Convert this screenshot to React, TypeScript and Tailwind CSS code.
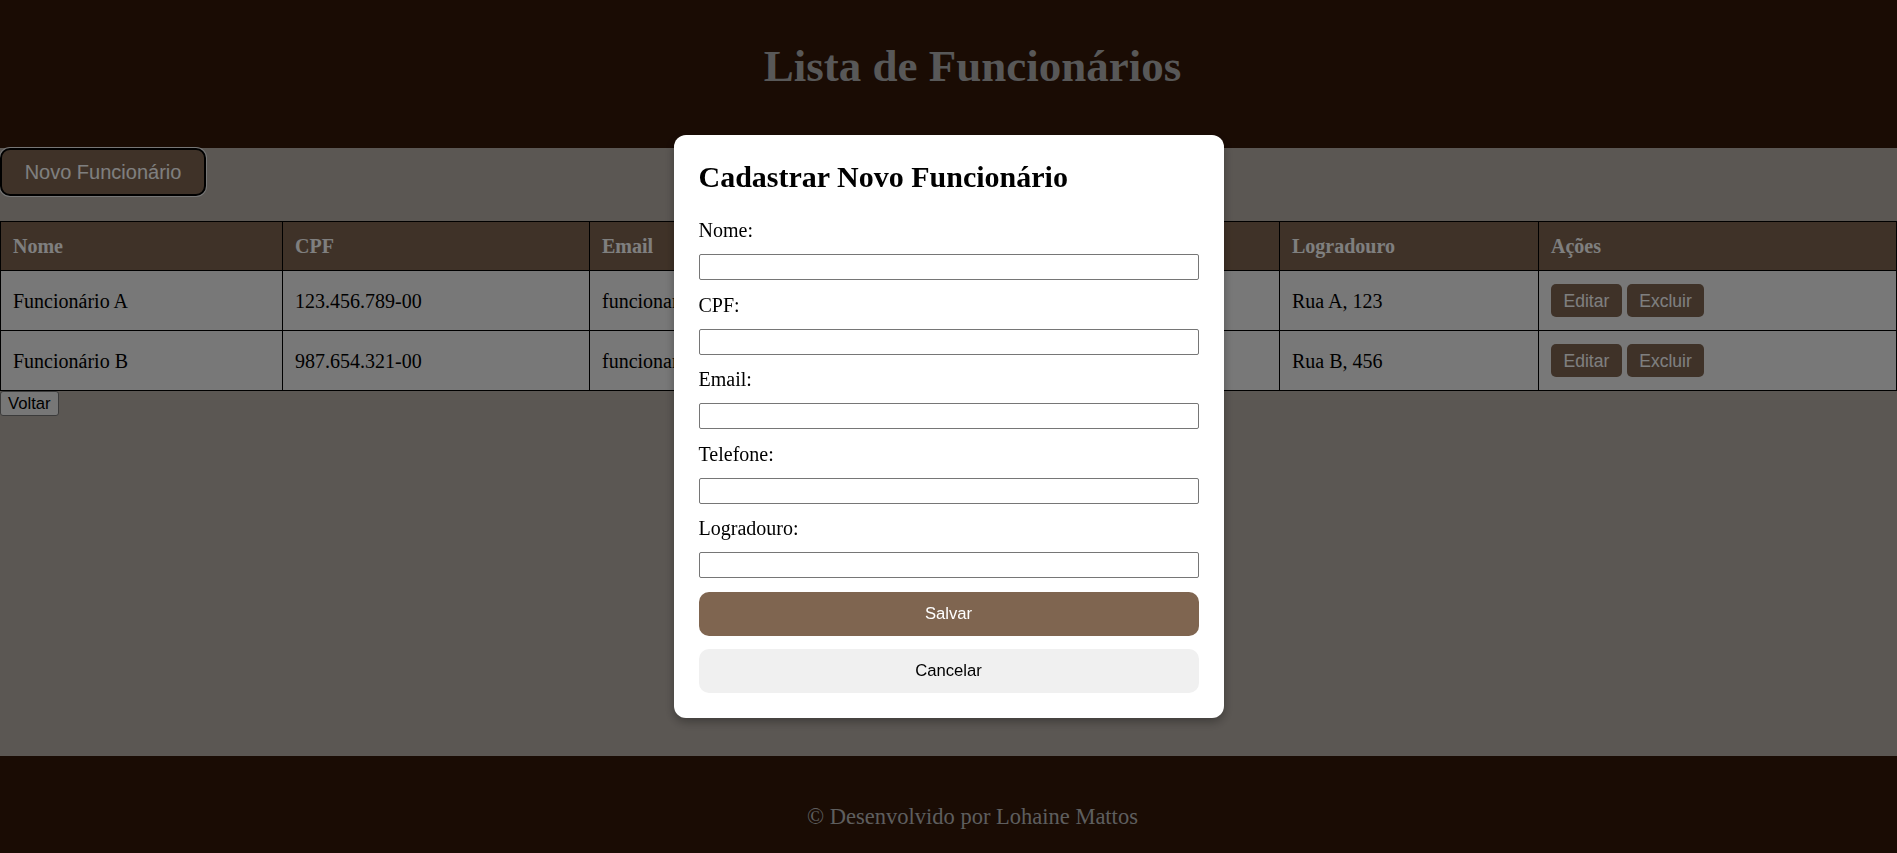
import React from 'react';

const EMPLOYEES = [
  { nome: 'Funcionário A', cpf: '123.456.789-00', email: 'funcionarioa@email.com', telefone: '(11) 91234-5678', logradouro: 'Rua A, 123' },
  { nome: 'Funcionário B', cpf: '987.654.321-00', email: 'funcionariob@email.com', telefone: '(11) 98765-4321', logradouro: 'Rua B, 456' },
];

const FIELDS = ['Nome', 'CPF', 'Email', 'Telefone', 'Logradouro'];

const sans = "font-['Liberation_Sans',Arial,sans-serif]";

export default function App() {
  const [open, setOpen] = React.useState(true);

  return (
    <div className="font-['Liberation_Serif','Times_New_Roman',serif] text-[20px] text-black">
      <header className="h-[148px] bg-[#341809] pl-[48px] pt-[40px]">
        <h1 className="text-center text-[45px] font-bold leading-[52px] text-[#b0b0b0]">Lista de Funcionários</h1>
      </header>

      <main className="h-[608px] bg-[#b6aea6]">
        <button
          onClick={() => setOpen(true)}
          className={`${sans} block h-[48px] w-[206px] rounded-[10px] border-2 border-black bg-[#7f6550] text-[20px] leading-[23px] text-white shadow-[0_0_0_1px_#eeeeee]`}
        >
          Novo Funcionário
        </button>

        <table className="mt-[25px] w-full table-fixed border-collapse">
          <colgroup>
            <col className="w-[282px]" />
            <col className="w-[307px]" />
            <col className="w-[345px]" />
            <col className="w-[345px]" />
            <col className="w-[259px]" />
            <col />
          </colgroup>
          <thead>
            <tr className="h-[49px] bg-[#7f6550] text-white">
              {['Nome', 'CPF', 'Email', 'Telefone', 'Logradouro', 'Ações'].map((h) => (
                <th key={h} className="border border-black px-[12px] text-left font-bold">
                  {h}
                </th>
              ))}
            </tr>
          </thead>
          <tbody>
            {EMPLOYEES.map((e) => (
              <tr key={e.cpf} className="h-[60px] bg-[#f0f0f0]">
                <td className="border border-black px-[12px]">{e.nome}</td>
                <td className="border border-black px-[12px]">{e.cpf}</td>
                <td className="truncate border border-black px-[12px]">{e.email}</td>
                <td className="border border-black px-[12px]">{e.telefone}</td>
                <td className="border border-black px-[12px]">{e.logradouro}</td>
                <td className="border border-black px-[12px]">
                  <div className="flex gap-[5px]">
                    <button className={`${sans} rounded-[5px] bg-[#7f6550] px-[12.5px] py-[6.25px] text-[17.5px] leading-[20px] text-white`}>Editar</button>
                    <button className={`${sans} rounded-[5px] bg-[#7f6550] px-[12.5px] py-[6.25px] text-[17.5px] leading-[20px] text-white`}>Excluir</button>
                  </div>
                </td>
              </tr>
            ))}
          </tbody>
        </table>

        <button className={`${sans} block h-[25px] rounded-[3px] border border-[#767676] bg-[#efefef] px-[7px] text-[16.67px] leading-[19px] text-black`}>
          Voltar
        </button>
      </main>

      <footer className="h-[97px] bg-[#341809] pl-[48px] pt-[48px] text-center text-[22.5px] leading-[25px] text-[#bcbcbc]">
        © Desenvolvido por Lohaine Mattos
      </footer>

      {open && (
        <div className="fixed inset-0 z-50 flex items-center justify-center bg-black/50">
          <div className="w-[550px] rounded-[12px] bg-white p-[25px] shadow-[0_4px_10px_rgba(0,0,0,0.3)]">
            <h2 className="mb-[24.5px] text-[30px] font-bold leading-[34.5px]">Cadastrar Novo Funcionário</h2>
            {FIELDS.map((f) => (
              <div key={f}>
                <label className="mb-[12px] block leading-[23px]">{f}:</label>
                <input type="text" className="mb-[13.6px] block h-[26px] w-full rounded-[2px] border border-[#767676] bg-white px-[2px] text-[16.67px] outline-none" />
              </div>
            ))}
            <button className={`${sans} block h-[44px] w-full rounded-[10px] bg-[#7f6550] text-[16.67px] text-white`}>Salvar</button>
            <button onClick={() => setOpen(false)} className={`${sans} mt-[13px] block h-[44px] w-full rounded-[10px] bg-[#f0f0f0] text-[16.67px] text-black`}>
              Cancelar
            </button>
          </div>
        </div>
      )}
    </div>
  );
}
